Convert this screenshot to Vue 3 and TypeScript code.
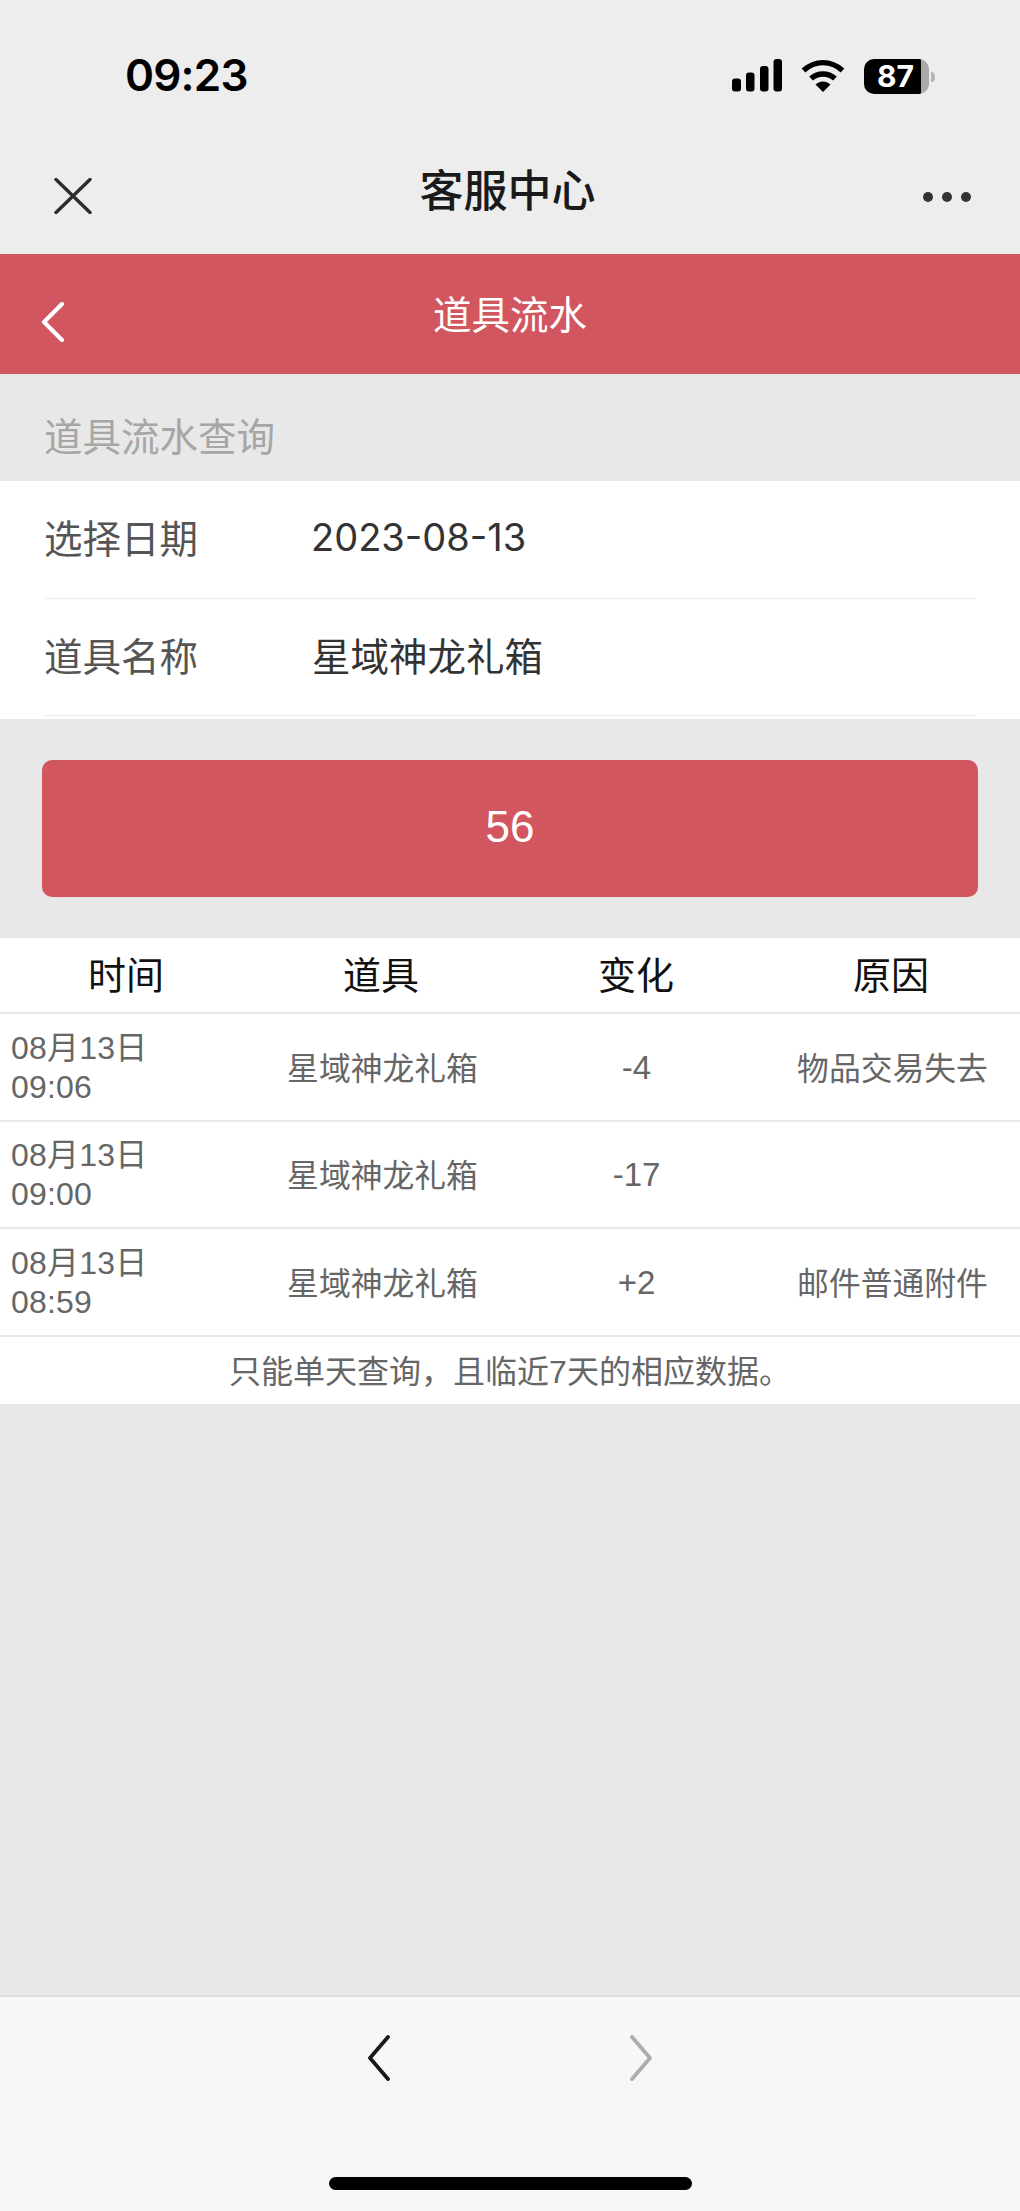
<script setup lang="ts">
interface Row { date: string; time: string; item: string; change: string; reason: string }
const rows: Row[] = [
  { date: '08月13日', time: '09:06', item: '星域神龙礼箱', change: '-4', reason: '物品交易失去' },
  { date: '08月13日', time: '09:00', item: '星域神龙礼箱', change: '-17', reason: '' },
  { date: '08月13日', time: '08:59', item: '星域神龙礼箱', change: '+2', reason: '邮件普通附件' },
]
const headers: string[] = ['时间', '道具', '变化', '原因']
</script>

<template>
  <div class="page">
    <header class="status">
      <span class="clock">09:23</span>
      <div class="status-icons">
        <svg width="50" height="33" viewBox="0 0 50 33" fill="#000">
          <rect x="0" y="19.5" width="9" height="13" rx="3" />
          <rect x="14" y="13.5" width="8.5" height="19" rx="3" />
          <rect x="28" y="7" width="8.5" height="25.5" rx="3" />
          <rect x="41.5" y="0" width="8.5" height="32.5" rx="3" />
        </svg>
        <svg class="wifi" width="44" height="33" viewBox="0 0 44 33" fill="none" stroke="#000" stroke-width="5.4">
          <path d="M2.5 11.5C14 1 30 1 41.5 11.5" />
          <path d="M10 19.5C17 13.5 27 13.5 34 19.5" />
          <path d="M14.5 25.5L22 33L29.5 25.5C25 21.5 19 21.5 14.5 25.5Z" fill="#000" stroke="none" />
        </svg>
        <div class="battery">
          <div class="battery-body"><span>87</span></div>
          <i class="battery-nub"></i>
        </div>
      </div>
    </header>

    <nav class="wx-bar">
      <svg class="wx-close" width="38" height="36" viewBox="0 0 38 36" fill="none" stroke="#2c2c2c" stroke-width="3.4" stroke-linecap="round">
        <path d="M2 1.5L36 34.5M36 1.5L2 34.5" />
      </svg>
      <h1>客服中心</h1>
      <div class="wx-more"><i></i><i></i><i></i></div>
    </nav>

    <div class="red-bar">
      <svg class="back" width="24" height="40" viewBox="0 0 24 40" fill="none" stroke="#fff" stroke-width="4.2" stroke-linecap="round" stroke-linejoin="round">
        <path d="M21 2L3 20L21 38" />
      </svg>
      <span>道具流水</span>
    </div>

    <div class="section-title">道具流水查询</div>

    <section class="form">
      <div class="form-row">
        <label>选择日期</label>
        <span class="date-value">2023-08-13</span>
      </div>
      <div class="form-row">
        <label>道具名称</label>
        <span>星域神龙礼箱</span>
      </div>
    </section>

    <div class="btn-wrap">
      <button class="btn" type="button">56</button>
    </div>

    <section class="table">
      <div class="thead">
        <div v-for="h in headers" :key="h">{{ h }}</div>
      </div>
      <div v-for="r in rows" :key="r.time" class="trow">
        <div class="when">{{ r.date }}<br />{{ r.time }}</div>
        <div class="cjk-cell">{{ r.item }}</div>
        <div class="change">{{ r.change }}</div>
        <div class="cjk-cell">{{ r.reason }}</div>
      </div>
      <p class="note">只能单天查询，且临近7天的相应数据。</p>
    </section>

    <div class="spacer"></div>

    <footer class="wx-foot">
      <div class="arrows">
        <svg width="24" height="46" viewBox="0 0 24 46" fill="none" stroke="#1a1a1a" stroke-width="3.8" stroke-linecap="round" stroke-linejoin="round">
          <path d="M21 2L3 23L21 44" />
        </svg>
        <svg width="24" height="46" viewBox="0 0 24 46" fill="none" stroke="#adadad" stroke-width="3.8" stroke-linecap="round" stroke-linejoin="round">
          <path d="M3 2L21 23L3 44" />
        </svg>
      </div>
      <div class="home-bar"></div>
    </footer>
  </div>
</template>

<style>
html, body { margin: 0; padding: 0; }
</style>

<style scoped>
.page {
  width: 1020px;
  min-height: 2211px;
  display: flex;
  flex-direction: column;
  background: #e8e8e8;
  font-family: "Liberation Sans", "Noto Sans CJK SC", sans-serif;
  color: #333;
}
.status {
  height: 140px;
  box-sizing: border-box;
  background: #ededed;
  padding: 50px 85px 0 125px;
  display: flex;
  justify-content: space-between;
  align-items: flex-start;
}
.clock {
  font-family: Inter, sans-serif;
  font-weight: 600;
  font-size: 44px;
  letter-spacing: -0.8px;
  line-height: 50px;
  color: #000;
}
.status-icons {
  display: flex;
  align-items: flex-start;
  padding-top: 9px;
}
.wifi { margin-left: 19px; }
.battery {
  margin-left: 19px;
  display: flex;
  align-items: center;
}
.battery-body {
  width: 65px;
  height: 35px;
  border-radius: 10px;
  background: linear-gradient(90deg, #000 0 57px, #a9a9a9 57px);
  color: #fff;
  font-family: Inter, sans-serif;
  font-weight: 700;
  font-size: 30px;
  line-height: 35px;
  box-sizing: border-box;
  padding-left: 13px;
}
.battery-nub {
  width: 4px;
  height: 10px;
  margin-left: 2px;
  border-radius: 0 4px 4px 0;
  background: #b5b5b5;
}
.wx-bar {
  height: 114px;
  background: #ededed;
  display: flex;
  align-items: center;
  justify-content: space-between;
  padding: 0 49px 0 54px;
}
.wx-close { margin-bottom: 3px; }
.wx-bar h1 {
  margin: 0 0 11px;
  font-size: 44px;
  font-weight: 500;
  line-height: 56px;
  color: #1a1a1a;
}
.wx-more { display: flex; gap: 9px; }
.wx-more i {
  width: 10px;
  height: 10px;
  border-radius: 50%;
  background: #333;
}
.red-bar {
  position: relative;
  height: 120px;
  background: #d25660;
  color: #fff;
  font-size: 38.5px;
  display: flex;
  align-items: center;
  justify-content: center;
}
.red-bar span { margin-top: -4px; }
.back {
  position: absolute;
  left: 41px;
  top: 48px;
}
.section-title {
  height: 107px;
  box-sizing: border-box;
  padding: 40px 0 0 44px;
  font-size: 38.5px;
  line-height: 48px;
  color: #a6a6a6;
}
.form {
  background: #fff;
  padding: 0 44px;
  height: 238px;
}
.form-row {
  height: 117.5px;
  box-sizing: border-box;
  padding-bottom: 6px;
  border-bottom: 1px solid #ececec;
  display: flex;
  align-items: center;
  font-size: 38.5px;
  color: #333;
}
.form-row label {
  width: 268px;
  color: #555;
}
.date-value {
  font-family: Inter, "Liberation Sans", sans-serif;
  font-size: 38px;
  margin-left: -1px;
  padding-top: 2px;
}
.btn-wrap {
  padding: 41px 42px;
}
.btn {
  display: block;
  width: 100%;
  height: 137px;
  border: 0;
  border-radius: 10px;
  background: #d25660;
  color: #fff;
  font: inherit;
  font-size: 44px;
  padding: 0 0 3px;
}
.table {
  background: #fff;
}
.thead, .trow {
  display: grid;
  grid-template-columns: repeat(4, 255px);
  text-align: center;
  align-items: center;
  border-bottom: 2px solid #e9e9e9;
  box-sizing: border-box;
}
.thead {
  height: 76px;
  padding-bottom: 6px;
  font-size: 38px;
  color: #111;
}
.thead > div { margin-left: -3px; }
.trow {
  height: 107.5px;
  font-size: 32px;
  color: #666;
}
.cjk-cell { padding-bottom: 2px; font-size: 31.8px; }
.when {
  text-align: left;
  padding: 2px 0 0 11px;
  line-height: 39px;
  letter-spacing: 0.2px;
}
.change { padding-top: 2px; font-size: 33px; margin-left: -2px; }
.note {
  margin: 0;
  height: 67px;
  box-sizing: border-box;
  padding-top: 3px;
  line-height: 64px;
  text-align: center;
  font-size: 32px;
  color: #666;
}
.spacer { flex: 1; }
.wx-foot {
  height: 216px;
  box-sizing: border-box;
  background: #f7f7f7;
  border-top: 2px solid #dedede;
  display: flex;
  flex-direction: column;
  align-items: center;
}
.arrows {
  margin-top: 38px;
  display: flex;
  gap: 238px;
}
.home-bar {
  margin-top: 96px;
  width: 363px;
  height: 13px;
  border-radius: 7px;
  background: #000;
}
</style>
